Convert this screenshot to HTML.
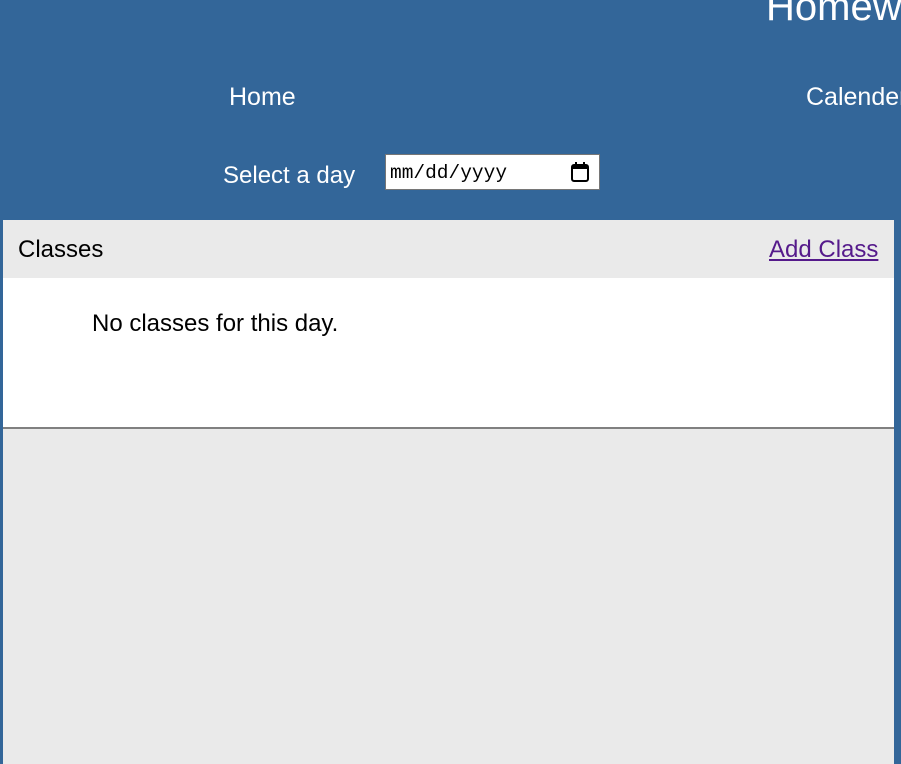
<!DOCTYPE html>
<html><head><style>
html,body{margin:0;padding:0;width:901px;height:764px;overflow:hidden;background:#336699;font-family:"Liberation Sans",sans-serif;}
#w{position:relative;width:901px;height:764px;overflow:hidden;}
.a{position:absolute;white-space:nowrap;}
</style></head><body><div id="w">
<div class="a" style="left:766px;top:-15px;font-size:40px;color:#fff;line-height:44px">Homework</div>
<div class="a" style="left:229px;top:83px;font-size:25px;color:#fff;line-height:28px">Home</div>
<div class="a" style="left:806px;top:83px;font-size:25px;color:#fff;line-height:28px">Calender</div>
<div class="a" style="left:223px;top:162px;font-size:24px;color:#fff;line-height:28px">Select a day</div>
<div class="a" style="left:385px;top:154px;width:213px;height:34px;background:#fff;border:1px solid #767676;">
 <span class="a" style="left:4px;top:7px;font-family:'Liberation Mono',monospace;font-size:19.5px;color:#000;line-height:22px">mm/dd/yyyy</span>
 <svg class="a" style="left:184px;top:6px" width="20" height="22" viewBox="0 0 20 22"><rect x="2" y="4" width="16" height="16" rx="2" fill="none" stroke="#000" stroke-width="2"/><rect x="2" y="4" width="16" height="4" fill="#000"/><rect x="5" y="1" width="2" height="4" fill="#000"/><rect x="13" y="1" width="2" height="4" fill="#000"/></svg>
</div>
<div class="a" style="left:3px;top:220px;width:891px;height:544px;background:#eaeaea"></div>
<div class="a" style="left:3px;top:278px;width:891px;height:149px;background:#fff;border-bottom:2px solid #808080"></div>
<div class="a" style="left:18px;top:236px;font-size:24px;color:#000;line-height:28px">Classes</div>
<div class="a" style="left:769px;top:236px;font-size:24px;color:#551a8b;line-height:28px;text-decoration:underline">Add Class</div>
<div class="a" style="left:92px;top:310px;font-size:24px;color:#000;line-height:28px">No classes for this day.</div>
</div></body></html>
